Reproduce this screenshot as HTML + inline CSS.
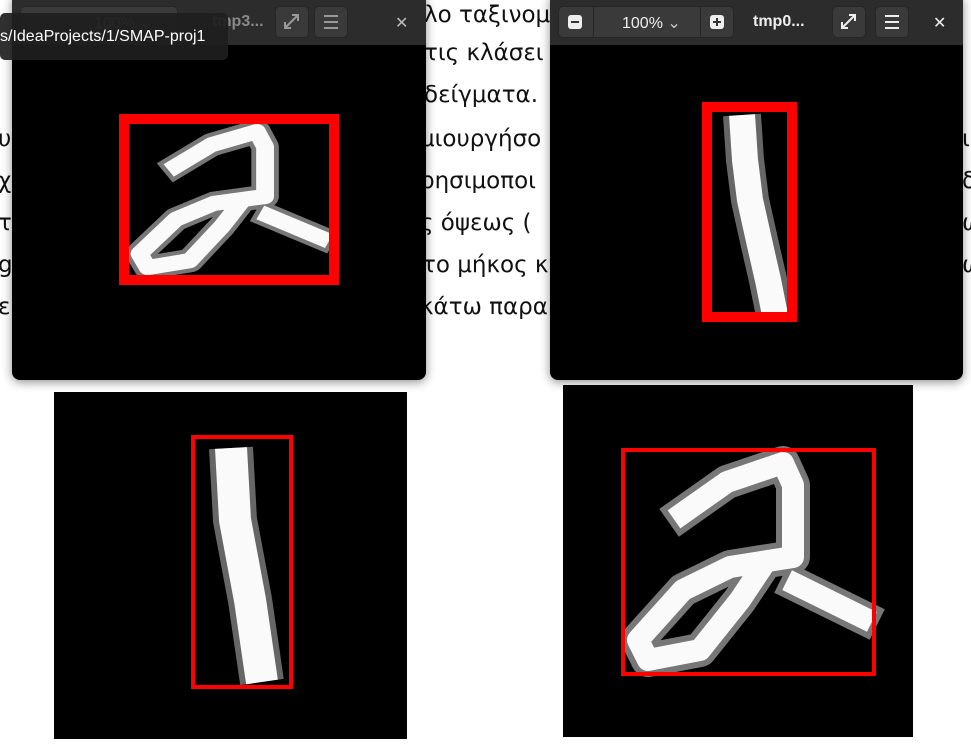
<!DOCTYPE html>
<html><head><meta charset="utf-8"><style>
body{margin:0;width:971px;height:751px;background:#fff;position:relative;overflow:hidden;font-family:"DejaVu Sans","Liberation Sans",sans-serif}
.t{position:absolute;font-size:23px;color:#111;white-space:nowrap;line-height:1}
.win{position:absolute;background:#000;border-radius:8px;box-shadow:0 2px 10px rgba(0,0,0,.45);overflow:hidden}
.hdr{position:absolute;left:0;top:0;right:0;height:45px;background:#2c2c2c}
.btn{position:absolute;top:6px;height:32px;background:#3a3a3a;border-radius:5px;border:1px solid #262626;box-sizing:border-box;color:#eee;font-size:16px}
.lab{position:absolute;top:13px;color:#eee;font-size:16px;font-family:"Liberation Sans",sans-serif}
</style></head><body>
<div class="t" style="left:424px;top:4px">λο ταξινομ</div>
<div class="t" style="left:424px;top:42px">τις κλάσει</div>
<div class="t" style="left:424px;top:84px">δείγματα.</div>
<div class="t" style="left:420px;top:128px">μιουργήσο</div>
<div class="t" style="left:420px;top:170px">ρησιμοποι</div>
<div class="t" style="left:420px;top:212px">ς όψεως (</div>
<div class="t" style="left:422px;top:254px">το μήκος κ</div>
<div class="t" style="left:420px;top:296px">κάτω παρα</div>
<div class="t" style="left:-2px;top:128px">υ</div>
<div class="t" style="left:-2px;top:170px">χ</div>
<div class="t" style="left:-2px;top:212px">τ</div>
<div class="t" style="left:-2px;top:254px">g</div>
<div class="t" style="left:-2px;top:296px">ε</div>
<div class="t" style="left:962px;top:128px">ι</div>
<div class="t" style="left:962px;top:170px">δ</div>
<div class="t" style="left:962px;top:212px">ω</div>
<div class="t" style="left:962px;top:254px">ω</div>

<div class="win" style="left:12px;top:-6px;width:414px;height:386px">
 <div class="hdr" style="top:6px">
  <div class="btn" style="left:8px;width:158px"></div>
  <div class="lab" style="left:82px;color:#888">100% ⌄</div>
  <div class="lab" style="left:200px;color:#888;font-weight:bold">tmp3...</div>
  <div class="btn" style="left:263px;width:34px"><svg width="32" height="30"><path d="M9 21L22 8M16 8h6v6M9 15v6h6" stroke="#999" stroke-width="2" fill="none"/></svg></div>
  <div class="btn" style="left:302px;width:34px"><svg width="32" height="30"><path d="M9 9h14M9 15h14M9 21h14" stroke="#999" stroke-width="2"/></svg></div>
  <div class="lab" style="left:383px;color:#bbb">✕</div>
 </div>
</div>
<div class="win" style="left:550px;top:-6px;width:413px;height:386px">
 <div class="hdr" style="top:6px">
  <div class="btn" style="left:8px;width:176px"></div>
  <div style="position:absolute;left:43px;top:6px;width:1px;height:32px;background:#262626"></div>
  <div style="position:absolute;left:150px;top:6px;width:1px;height:32px;background:#262626"></div>
  <div style="position:absolute;left:18px;top:15px;width:14px;height:14px;background:#eee;border-radius:3px"><div style="position:absolute;left:3px;top:6px;width:8px;height:2px;background:#333"></div></div>
  <div class="lab" style="left:72px">100% <span style="color:#ccc">⌄</span></div>
  <div style="position:absolute;left:160px;top:15px;width:14px;height:14px;background:#eee;border-radius:3px"><div style="position:absolute;left:3px;top:6px;width:8px;height:2px;background:#333"></div><div style="position:absolute;left:6px;top:3px;width:2px;height:8px;background:#333"></div></div>
  <div class="lab" style="left:203px;font-weight:bold">tmp0...</div>
  <div class="btn" style="left:282px;width:34px"><svg width="32" height="30"><path d="M9 21L22 8M16 8h6v6M9 15v6h6" stroke="#eee" stroke-width="2" fill="none"/></svg></div>
  <div class="btn" style="left:325px;width:34px"><svg width="32" height="30"><path d="M9 9h14M9 15h14M9 21h14" stroke="#eee" stroke-width="2"/></svg></div>
  <div class="lab" style="left:383px">✕</div>
 </div>
</div>
<div style="position:absolute;left:0;top:13px;width:228px;height:47px;background:rgba(30,30,30,.92);border-radius:5px;color:#fff;font-size:16px;font-family:'Liberation Sans',sans-serif;line-height:47px">s/IdeaProjects/1/SMAP-proj1</div>

<div style="position:absolute;left:54px;top:392px;width:353px;height:347px;background:#000"></div>
<div style="position:absolute;left:563px;top:385px;width:350px;height:352px;background:#000"></div>

<svg style="position:absolute;left:0;top:0" width="971" height="751">
<defs>
<g id="two">
<path d="M683,513 L727,482 L783,463 L793,485 L793,557 L730,567 L683,590 L638,640 L648,660 L700,650 L740,600 L760,570 M797,585 L862,617" fill="none" stroke="#777" stroke-width="34" stroke-linejoin="round" stroke-linecap="square"/>
<path d="M683,513 L727,482 L783,463 L793,485 L793,557 L730,567 L683,590 L638,640 L648,660 L700,650 L740,600 L760,570 M797,585 L862,617" fill="none" stroke="#fafafa" stroke-width="22" stroke-linejoin="round" stroke-linecap="square"/>
</g>
</defs>
<use href="#two"/>
<rect x="623" y="450" width="251" height="224" fill="none" stroke="#f00" stroke-width="4"/>
<g transform="translate(129,124) scale(0.81,0.69) translate(-625,-452)"><use href="#two"/></g>
<rect x="124" y="119" width="210" height="161" fill="none" stroke="#f00" stroke-width="10"/>
<path d="M231,448 L235,520 L250,600 L262,682" fill="none" stroke="#666" stroke-width="44"/>
<path d="M231,448 L235,520 L250,600 L262,682" fill="none" stroke="#fafafa" stroke-width="32"/>
<rect x="193" y="437" width="98" height="250" fill="none" stroke="#f00" stroke-width="4"/>
<path d="M742,115 L745,160 L750,200 L760,245 L768,280 L775,315" fill="none" stroke="#666" stroke-width="38"/>
<path d="M742,115 L745,160 L750,200 L760,245 L768,280 L775,315" fill="none" stroke="#fafafa" stroke-width="26"/>
<rect x="707" y="107" width="85" height="210" fill="none" stroke="#f00" stroke-width="10"/>
</svg>
</body></html>
